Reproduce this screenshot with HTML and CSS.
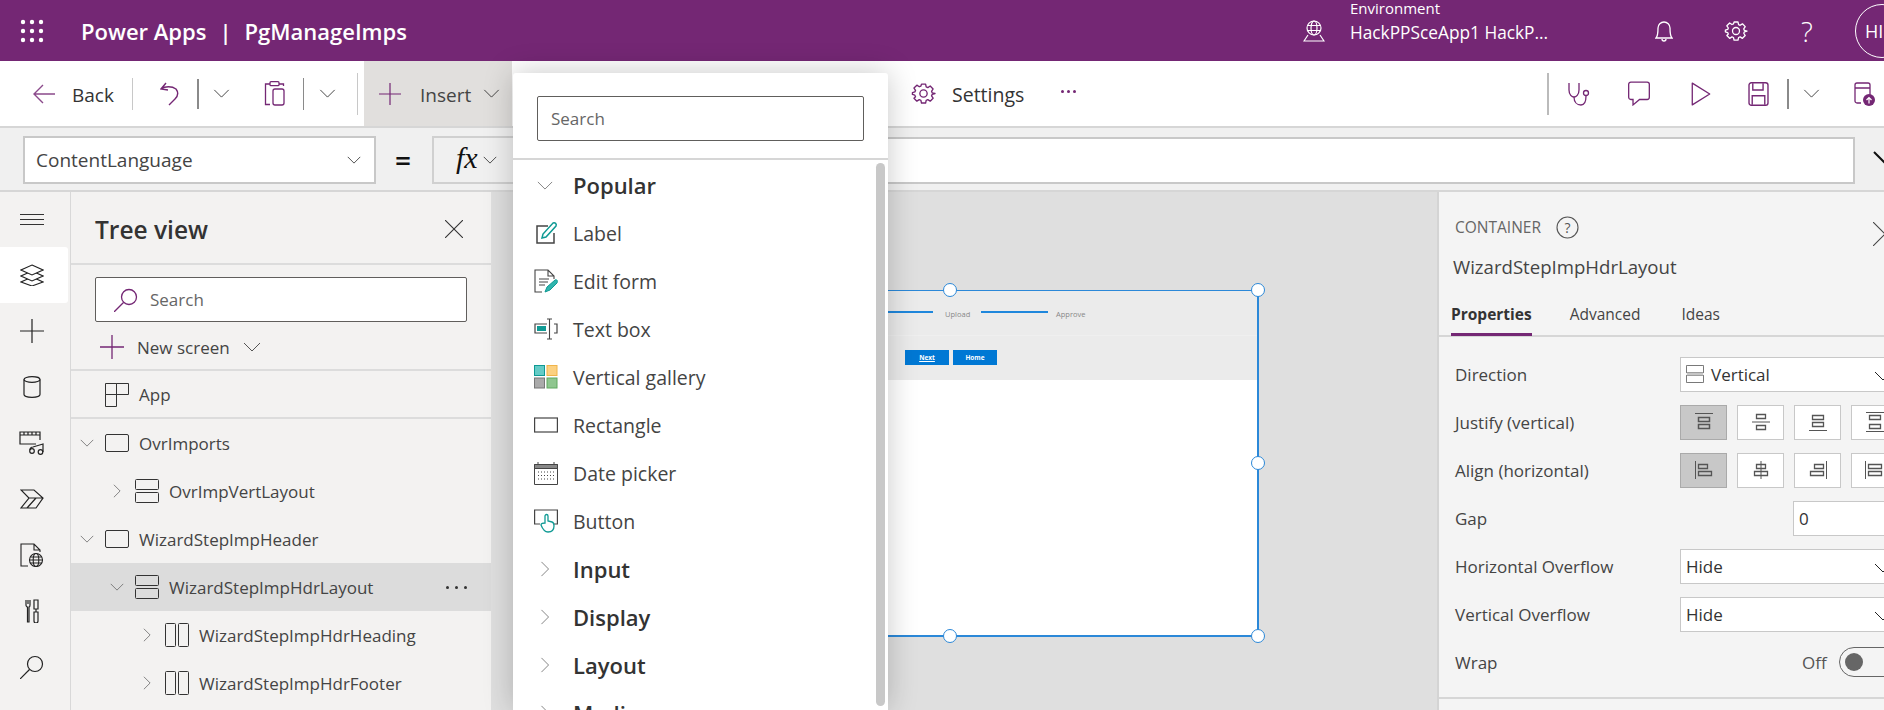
FILE: index.html
```html
<!DOCTYPE html>
<html lang="en">
<head>
    <meta charset="UTF-8">
    <meta name="viewport" content="width=device-width, initial-scale=1.0">
    <title>Power Apps | PgManageImps</title>
    <link rel="stylesheet" href="styles.css">
</head>
<body>
    <svg class="sprite" width="0" height="0">
        <symbol id="chev-down" viewBox="0 0 18 10"><path d="M1 1l8 8 8-8" fill="none" stroke="currentColor"/></symbol>
        <symbol id="chev-right" viewBox="0 0 10 18"><path d="M1 1l8 8-8 8" fill="none" stroke="currentColor"/></symbol>
        <symbol id="box" viewBox="0 0 24 24"><rect x=".5" y="3.500" width="23" height="17" rx="1.500" fill="none" stroke="currentColor"/></symbol>
        <symbol id="vert" viewBox="0 0 24 24"><rect x=".5" y=".5" width="23" height="10" rx="1" fill="none" stroke="currentColor"/><rect x=".5" y="13.500" width="23" height="10" rx="1" fill="none" stroke="currentColor"/></symbol>
        <symbol id="horiz" viewBox="0 0 24 24"><rect x=".5" y=".5" width="10" height="23" rx="1" fill="none" stroke="currentColor"/><rect x="13.500" y=".5" width="10" height="23" rx="1" fill="none" stroke="currentColor"/></symbol>
        <symbol id="gear" viewBox="0 0 24 24"><path d="M9.600 1h4.800l.7 3.200 1.900.8 2.800-1.800 3.400 3.400-1.800 2.800.8 1.900 3.200.7v0l-3.200.9-.8 1.800 1.800 2.800-3.400 3.400-2.800-1.800-1.900.8-.7 3.200H9.600l-.7-3.200-1.900-.8-2.800 1.800-3.400-3.400L2.600 15.700l-.8-1.800L-1 13v-2l2.800-.9.8-1.800L.8 5.600l3.400-3.400L7 4l1.900-.8z" transform="translate(2.200 2.200) scale(.82)" fill="none" stroke="currentColor" stroke-width="1.600" stroke-linejoin="round"/><circle cx="12" cy="12" r="3.500" fill="none" stroke="currentColor" stroke-width="1.300"/></symbol>
    </svg>

    <header class="suite-bar">
        <svg class="waffle" width="24" height="24" viewBox="0 0 24 24" fill="#fff">
            <circle cx="3" cy="3" r="2.200"/><circle cx="12" cy="3" r="2.200"/><circle cx="21" cy="3" r="2.200"/>
            <circle cx="3" cy="12" r="2.200"/><circle cx="12" cy="12" r="2.200"/><circle cx="21" cy="12" r="2.200"/>
            <circle cx="3" cy="21" r="2.200"/><circle cx="12" cy="21" r="2.200"/><circle cx="21" cy="21" r="2.200"/>
        </svg>
        <div class="app-title">Power Apps<span class="title-bar">|</span>PgManageImps</div>
        <svg class="env-globe" width="22" height="22" viewBox="0 0 22 22" fill="none" stroke="#fff" stroke-width="1.200">
            <circle cx="11" cy="8" r="7"/><ellipse cx="11" cy="8" rx="3" ry="7"/><path d="M4.500 5.500h13M4.500 10.500h13M5 15l-4 6h20l-4-6"/>
        </svg>
        <div class="env">
            <div class="env-label">Environment</div>
            <div class="env-name">HackPPSceApp1 HackP...</div>
        </div>
        <svg class="bell" width="18" height="24" viewBox="0 0 18 24" fill="none" stroke="#fff" stroke-width="1.300">
            <path d="M1 19c2-2 2-5 2-10a6 6 0 0 1 12 0c0 5 0 8 2 10z"/><path d="M7 20a2 2 0 0 0 4 0"/>
        </svg>
        <svg class="top-gear" width="24" height="24"><use href="#gear"/></svg>
        <div class="help">?</div>
        <div class="avatar">HI</div>
    </header>

    <div class="toolbar">
        <svg class="back-arrow" width="22" height="20" viewBox="0 0 22 20" fill="none" stroke="#8b4a8b" stroke-width="1.400"><path d="M10 1l-9 9 9 9M1 10h21"/></svg>
        <span class="tb-text back-text">Back</span>
        <i class="sep sep-a"></i>
        <svg class="undo" width="20" height="24" viewBox="0 0 20 24" fill="none" stroke="#742774" stroke-width="1.400"><path d="M6 1L1 7l7 1M1 7c4-3 11-3 15 0 3 4 2 7-1 10l-6 6"/></svg>
        <i class="sep sep-b"></i>
        <svg class="tb-chev chev-a" width="17" height="9"><use href="#chev-down"/></svg>
        <svg class="clip" width="21" height="25" viewBox="0 0 21 25" fill="none" stroke="#742774" stroke-width="1.300"><path d="M6 3H1.500v20.500H6M15 3h4.500v2"/><rect x="6" y=".7" width="9" height="4" rx="1"/><rect x="9" y="8" width="11" height="16" rx="2"/></svg>
        <i class="sep sep-c"></i>
        <svg class="tb-chev chev-b" width="17" height="9"><use href="#chev-down"/></svg>
        <i class="sep sep-d"></i>
        <div class="insert-btn">
            <svg width="22" height="22" viewBox="0 0 22 22" stroke="#742774" stroke-width="1.200"><path d="M11 0v22M0 11h22"/></svg>
            <span class="tb-text">Insert</span>
            <svg class="tb-chev" width="17" height="9"><use href="#chev-down"/></svg>
        </div>
        <svg class="tb-gear" width="25" height="25"><use href="#gear"/></svg>
        <span class="tb-text settings-text">Settings</span>
        <span class="tb-dots"><i></i><i></i><i></i></span>
        <i class="sep sep-e"></i>
        <svg class="tb-r steth" width="22" height="24" viewBox="0 0 22 24" fill="none" stroke="#742774" stroke-width="1.300"><path d="M1 1v7c0 5 3 7 5 7s5-2 5-7V1"/><path d="M6 15c0 5 3 8 7 8s5-4 5-9"/><circle cx="18" cy="11" r="2.500"/></svg>
        <svg class="tb-r comment" width="24" height="25" viewBox="0 0 21 23" fill="none" stroke="#742774" stroke-width="1.200"><path d="M3 1h15a2 2 0 0 1 2 2v12a2 2 0 0 1-2 2h-7l-6 5v-5H3a2 2 0 0 1-2-2V3a2 2 0 0 1 2-2z"/></svg>
        <svg class="tb-r play" width="20" height="24" viewBox="0 0 18 22" fill="none" stroke="#742774" stroke-width="1.200" stroke-linejoin="round"><path d="M1 1l16 10L1 21z"/></svg>
        <svg class="tb-r save" width="21" height="24" viewBox="0 0 18 21" fill="none" stroke="#742774" stroke-width="1.200"><rect x=".7" y=".7" width="16.600" height="19.600" rx="2"/><path d="M4 1v6h9V1M3.500 20v-8h11v8"/></svg>
        <i class="sep sep-b sep-f"></i>
        <svg class="tb-chev chev-c" width="17" height="9"><use href="#chev-down"/></svg>
        <svg class="tb-r publish" width="21" height="24" viewBox="0 0 21 24"><path d="M7 21H3a2 2 0 0 1-2-2V3a2 2 0 0 1 2-2h11a2 2 0 0 1 2 2v10M1 6h15" fill="none" stroke="#742774" stroke-width="1.300"/><circle cx="15" cy="18" r="6" fill="#742774"/><path d="M15 21.500v-6M12.500 18l2.500-2.500 2.500 2.500" fill="none" stroke="#fff" stroke-width="1.200"/></svg>
    </div>

    <div class="formula-bar">
        <div class="prop-select">
            <span>ContentLanguage</span>
            <svg width="14" height="8"><use href="#chev-down"/></svg>
        </div>
        <div class="equals">=</div>
        <div class="fx-btn">
            <span class="fx-text">fx</span>
            <svg width="14" height="8"><use href="#chev-down"/></svg>
        </div>
        <div class="formula-input"></div>
        <svg class="formula-chev" width="36" height="20"><use href="#chev-down"/></svg>
    </div>

    <main class="workspace">
        <nav class="rail">
            <svg class="rail-hamb" width="24" height="12" viewBox="0 0 24 12" stroke="#333"><path d="M0 .5h24M0 5.500h24M0 10.500h24"/></svg>
            <div class="rail-item active">
                <svg width="24" height="22" viewBox="0 0 24 22" fill="#fff" stroke="#222" stroke-width="1.100"><path d="M12 13l11 5-11 4-11-4z"/><path d="M12 7l11 5-11 5-11-5z"/><path d="M12 1l11 5-11 5L1 6z"/></svg>
            </div>
            <div class="rail-item">
                <svg width="24" height="24" viewBox="0 0 24 24" stroke="#222" stroke-width="1.200"><path d="M12 0v24M0 12h24"/></svg>
            </div>
            <div class="rail-item">
                <svg width="18" height="22" viewBox="0 0 18 22" fill="none" stroke="#222" stroke-width="1.200"><ellipse cx="9" cy="3.500" rx="8" ry="2.800"/><path d="M1 3.500v15c0 1.500 3.500 2.800 8 2.800s8-1.300 8-2.800v-15"/></svg>
            </div>
            <div class="rail-item">
                <svg width="26" height="24" viewBox="0 0 26 24" fill="none" stroke="#222" stroke-width="1.200"><path d="M17 13H1V1h20v8M1 4h20M5 1v3M9 1v3M13 1v3M17 1v3"/><path d="M11 19c0-3 3-3 3-3l10-3v8"/><circle cx="21.500" cy="21" r="2.300"/><circle cx="13" cy="20" r="2.300"/></svg>
            </div>
            <div class="rail-item">
                <svg width="24" height="20" viewBox="0 0 24 20" fill="none" stroke="#222" stroke-width="1.200"><path d="M1 1h13l9 8-7 10H1l8-10zM9 9h14M7 19l9-10"/></svg>
            </div>
            <div class="rail-item">
                <svg width="24" height="24" viewBox="0 0 24 24" fill="none" stroke="#222" stroke-width="1.100"><path d="M8 23H1V1h13l6 6v2M14 1v6h6"/><circle cx="16" cy="17" r="6.500"/><ellipse cx="16" cy="17" rx="2.800" ry="6.500"/><path d="M9.500 17h13M10.500 14h11M10.500 20h11"/></svg>
            </div>
            <div class="rail-item">
                <svg width="16" height="24" viewBox="0 0 16 24" fill="none" stroke="#222" stroke-width="1.200"><path d="M2 1v5c0 1 1 2 1.500 2v15h1.500V8c.5 0 1-1 1-2V1M4 1v4"/><path d="M10 1h4v9h-4zM12 10v3M10 13h4v9a2 2 0 0 1-4 0z"/></svg>
            </div>
            <div class="rail-item">
                <svg width="24" height="24" viewBox="0 0 24 24" fill="none" stroke="#222" stroke-width="1.200"><circle cx="15" cy="9" r="7.500"/><path d="M9.500 14.500L0 24"/></svg>
            </div>
        </nav>

        <section class="tree">
            <div class="tree-head">
                <span class="tree-title">Tree view</span>
                <svg width="18" height="18" viewBox="0 0 18 18" stroke="#333" stroke-width="1.100"><path d="M0 0l18 18M18 0L0 18"/></svg>
            </div>
            <div class="tree-tools">
                <div class="search-box tree-search">
                    <svg width="24" height="24" viewBox="0 0 24 24" fill="none" stroke="#742774" stroke-width="1.300"><circle cx="15" cy="9" r="7.500"/><path d="M9.500 14.500L0 24"/></svg>
                    <span>Search</span>
                </div>
                <div class="new-screen">
                    <svg width="24" height="24" viewBox="0 0 24 24" stroke="#742774" stroke-width="1.300"><path d="M12 0v24M0 12h24"/></svg>
                    <span>New screen</span>
                    <svg class="ns-chev" width="18" height="10"><use href="#chev-down"/></svg>
                </div>
            </div>
            <div class="app-row">
                <svg width="24" height="24" viewBox="0 0 24 24" fill="none" stroke="#333"><path d="M.5.500h11v11H.5zM11.500.500h12v11h-12zM.5 11.500h11v12H.5z"/></svg>
                <span>App</span>
            </div>
            <ul class="tree-list">
                <li class="tree-row lvl-0"><svg class="twist" width="14" height="8"><use href="#chev-down"/></svg><svg class="node" width="24" height="24"><use href="#box"/></svg><span>OvrImports</span></li>
                <li class="tree-row lvl-1"><svg class="twist" width="14" height="14" viewBox="-4 0 18 18"><use href="#chev-right" width="10" height="18"/></svg><svg class="node" width="24" height="24"><use href="#vert"/></svg><span>OvrImpVertLayout</span></li>
                <li class="tree-row lvl-0"><svg class="twist" width="14" height="8"><use href="#chev-down"/></svg><svg class="node" width="24" height="24"><use href="#box"/></svg><span>WizardStepImpHeader</span></li>
                <li class="tree-row lvl-1 selected"><svg class="twist" width="14" height="8"><use href="#chev-down"/></svg><svg class="node" width="24" height="24"><use href="#vert"/></svg><span>WizardStepImpHdrLayout</span><b class="more"><i></i><i></i><i></i></b></li>
                <li class="tree-row lvl-2"><svg class="twist" width="14" height="14" viewBox="-4 0 18 18"><use href="#chev-right" width="10" height="18"/></svg><svg class="node" width="24" height="24"><use href="#horiz"/></svg><span>WizardStepImpHdrHeading</span></li>
                <li class="tree-row lvl-2"><svg class="twist" width="14" height="14" viewBox="-4 0 18 18"><use href="#chev-right" width="10" height="18"/></svg><svg class="node" width="24" height="24"><use href="#horiz"/></svg><span>WizardStepImpHdrFooter</span></li>
            </ul>
        </section>

        <section class="canvas">
            <div class="frame">
                <div class="frame-steps">
                    <i class="step-line first"></i>
                    <span class="step-name">Upload</span>
                    <i class="step-line"></i>
                    <span class="step-name">Approve</span>
                </div>
                <div class="frame-btns">
                    <span class="mini-btn under">Next</span>
                    <span class="mini-btn">Home</span>
                </div>
                <i class="handle h-top"></i>
                <i class="handle h-tr"></i>
                <i class="handle h-right"></i>
                <i class="handle h-br"></i>
                <i class="handle h-bottom"></i>
            </div>
        </section>

        <aside class="props">
            <div class="props-type">
                <span>CONTAINER</span>
                <svg width="23" height="23" viewBox="0 0 23 23"><circle cx="11.500" cy="11.500" r="10.500" fill="none" stroke="#555" stroke-width="1.100"/><text x="11.500" y="16.500" text-anchor="middle" font-size="14" fill="#555" font-family="Open Sans">?</text></svg>
                <svg class="props-close" width="24" height="24" viewBox="0 0 24 24" stroke="#444" stroke-width="1.100"><path d="M0 0l24 24M24 0L0 24"/></svg>
            </div>
            <div class="props-name">WizardStepImpHdrLayout</div>
            <div class="tabs">
                <span class="tab on">Properties</span>
                <span class="tab">Advanced</span>
                <span class="tab">Ideas</span>
            </div>
            <div class="prop-row">
                <label>Direction</label>
                <div class="ctl select">
                    <svg class="node" width="18" height="18"><use href="#vert"/></svg>
                    <span class="dark">Vertical</span>
                    <svg class="sel-chev" width="18" height="10"><use href="#chev-down"/></svg>
                </div>
            </div>
            <div class="prop-row">
                <label>Justify (vertical)</label>
                <div class="btn-group">
                    <div class="ctl sq on"><svg width="20" height="18" viewBox="0 0 20 18" fill="none" stroke="#555"><path d="M1 .5h18"/><path d="M4.500 4.500h11v4h-11zM4.500 11.500h11v4h-11z" stroke-width="1.500"/></svg></div>
                    <div class="ctl sq"><svg width="20" height="18" viewBox="0 0 20 18" fill="none" stroke="#555"><path d="M1 9h18"/><path d="M5.500 1.500h9v4h-9zM5.500 12.500h9v4h-9z" stroke-width="1.300"/></svg></div>
                    <div class="ctl sq"><svg width="20" height="18" viewBox="0 0 20 18" fill="none" stroke="#555"><path d="M1 17.500h18"/><path d="M4.500 2.500h11v4h-11zM4.500 9.500h11v4h-11z" stroke-width="1.300"/></svg></div>
                    <div class="ctl sq"><svg width="20" height="20" viewBox="0 0 20 20" fill="none" stroke="#555"><path d="M1 .5h18M1 19.500h18"/><path d="M4.500 3.500h11v4h-11zM4.500 12.500h11v4h-11z" stroke-width="1.300"/></svg></div>
                </div>
            </div>
            <div class="prop-row">
                <label>Align (horizontal)</label>
                <div class="btn-group">
                    <div class="ctl sq on"><svg width="18" height="20" viewBox="0 0 18 20" fill="none" stroke="#555"><path d="M.5 1v18"/><path d="M3.500 4.500h9v4h-9zM3.500 11.500h13v4h-13z" stroke-width="1.300"/></svg></div>
                    <div class="ctl sq"><svg width="18" height="20" viewBox="0 0 18 20" fill="none" stroke="#555"><path d="M9 1v18"/><path d="M4.500 4.500h9v4h-9zM2.500 11.500h13v4h-13z" stroke-width="1.300"/></svg></div>
                    <div class="ctl sq"><svg width="18" height="20" viewBox="0 0 18 20" fill="none" stroke="#555"><path d="M17.500 1v18"/><path d="M5.500 4.500h9v4h-9zM1.500 11.500h13v4h-13z" stroke-width="1.300"/></svg></div>
                    <div class="ctl sq"><svg width="20" height="20" viewBox="0 0 20 20" fill="none" stroke="#555"><path d="M.5 1v18M19.500 1v18"/><path d="M3.500 4.500h13v4h-13zM3.500 11.500h13v4h-13z" stroke-width="1.300"/></svg></div>
                </div>
            </div>
            <div class="prop-row">
                <label>Gap</label>
                <div class="ctl gap-input"><span class="dark">0</span></div>
            </div>
            <div class="prop-row">
                <label>Horizontal Overflow</label>
                <div class="ctl select"><span class="dark">Hide</span><svg class="sel-chev" width="18" height="10"><use href="#chev-down"/></svg></div>
            </div>
            <div class="prop-row">
                <label>Vertical Overflow</label>
                <div class="ctl select"><span class="dark">Hide</span><svg class="sel-chev" width="18" height="10"><use href="#chev-down"/></svg></div>
            </div>
            <div class="prop-row">
                <label>Wrap</label>
                <span class="off-text">Off</span>
                <div class="toggle"><i></i></div>
            </div>
            <div class="props-end"></div>
        </aside>
    </main>

    <div class="flyout">
        <div class="fly-head">
            <div class="search-box fly-search"><span>Search</span></div>
        </div>
        <div class="fly-body">
            <div class="fly-group"><svg class="fly-chev" width="16" height="9"><use href="#chev-down"/></svg><span>Popular</span></div>
            <div class="fly-item">
                <svg width="24" height="24" viewBox="0 0 24 24" fill="none"><path d="M14 5H3v17h17V12" stroke="#444" stroke-width="1.500"/><path d="M8 17l1-4L19 2c2-1 4 1 3 3L12 16z" stroke="#0f9a94" stroke-width="1.500"/></svg>
                <span>Label</span>
            </div>
            <div class="fly-item">
                <svg width="24" height="24" viewBox="0 0 24 24" fill="none"><path d="M8 23H1V1h13l6 6v3M14 1v6h6M5 10h10M5 13h9M5 16h6" stroke="#444" stroke-width="1.100"/><path d="M11 23l2-5 8-7c2-1 3 1 2 3l-7 7z" fill="#2fb5ae" stroke="#0f9a94"/></svg>
                <span>Edit form</span>
            </div>
            <div class="fly-item">
                <svg width="24" height="24" viewBox="0 0 24 24" fill="none"><path d="M13 7H1v9h12M20 7h3v9h-3" stroke="#444" stroke-width="1.200"/><rect x="3" y="9" width="9" height="5" fill="#0f9a94"/><path d="M13 2h5M13 22h5M15.500 2v20" stroke="#444" stroke-width="1.100"/></svg>
                <span>Text box</span>
            </div>
            <div class="fly-item">
                <svg width="24" height="24" viewBox="0 0 24 24"><rect x=".5" y=".5" width="10" height="10" fill="#65cbc6" stroke="#0f9a94"/><rect x="13" y=".5" width="10" height="10" fill="#fcd181" stroke="#f0b44a"/><rect x=".5" y="13" width="10" height="10" fill="#aaa" stroke="#777"/><rect x="13" y="13" width="10" height="10" fill="#8fc68f" stroke="#5fa85f"/></svg>
                <span>Vertical gallery</span>
            </div>
            <div class="fly-item">
                <svg width="24" height="24" viewBox="0 0 24 24" fill="none" stroke="#444" stroke-width="1.200"><rect x=".6" y="5" width="22.800" height="14"/></svg>
                <span>Rectangle</span>
            </div>
            <div class="fly-item">
                <svg width="24" height="24" viewBox="0 0 24 24" fill="none" stroke="#444"><path d="M.5 3.500h23v20H.5z"/><path d="M.5 3.500h23v4H.5z" fill="#888"/><path d="M4 1v3M20 1v3"/><path d="M4 11h16M4 14.500h16M4 18h16" stroke-dasharray="1 2"/></svg>
                <span>Date picker</span>
            </div>
            <div class="fly-item">
                <svg width="24" height="24" viewBox="0 0 24 24" fill="none"><path d="M6 15H.6V1h22.800v14H19" stroke="#444" stroke-width="1.200"/><path d="M11 14V7c0-2 3-2 3 0v5l4 1c2 .5 2 2 2 4 0 5-3 6-6 6s-5-2-7-7c0-2 2-2 4-2z" fill="#fff" stroke="#0f9a94" stroke-width="1.300"/></svg>
                <span>Button</span>
            </div>
            <div class="fly-group"><svg class="fly-chev" width="16" height="16" viewBox="-4 0 18 18"><use href="#chev-right" width="10" height="18"/></svg><span>Input</span></div>
            <div class="fly-group"><svg class="fly-chev" width="16" height="16" viewBox="-4 0 18 18"><use href="#chev-right" width="10" height="18"/></svg><span>Display</span></div>
            <div class="fly-group"><svg class="fly-chev" width="16" height="16" viewBox="-4 0 18 18"><use href="#chev-right" width="10" height="18"/></svg><span>Layout</span></div>
            <div class="fly-group"><svg class="fly-chev" width="16" height="16" viewBox="-4 0 18 18"><use href="#chev-right" width="10" height="18"/></svg><span>Media</span></div>
            <div class="fly-scroll"></div>
        </div>
    </div>
</body>
</html>
```

FILE: styles.css
```css
* {
    box-sizing: border-box;
}

html, body {
    margin: 0;
    height: 710px;
    overflow: hidden;
}

body {
    font-family: "Open Sans", "Noto Sans", Arial, sans-serif;
    font-size: 17px;
    color: #444;
    background-color: #f3f2f1;
    position: relative;
}

i, b {
    display: block;
    font-style: normal;
}

svg {
    flex: none;
    display: block;
}

.sprite {
    position: absolute;
}

/* top purple bar */
.suite-bar {
    height: 61px;
    background-color: #742774;
    color: #fff;
    display: flex;
    align-items: center;
    padding-left: 20px;
    overflow: hidden;
}

.app-title {
    margin-left: 37px;
    font-size: 22px;
    font-weight: 600;
    width: 1222px;
    flex: none;
    white-space: nowrap;
}

.title-bar {
    margin: 0 13px;
}

.env {
    margin-left: 25px;
    width: 305px;
    flex: none;
    align-self: flex-start;
}

.env-label {
    font-size: 15px;
    line-height: 16px;
}

.env-name {
    font-size: 17.300px;
    line-height: 24px;
    margin-top: 5px;
    white-space: nowrap;
}

.top-gear {
    margin-left: 51px;
    color: #fff;
}

.help {
    margin-left: 53px;
    font-size: 28px;
    width: 16px;
    flex: none;
    font-weight: 300;
}

.avatar {
    margin-left: 38px;
    width: 54px;
    height: 54px;
    flex: none;
    border: 1px solid #fff;
    border-radius: 50%;
    font-size: 18px;
    line-height: 52px;
    padding-left: 9px;
}

/* command bar */
.toolbar {
    height: 67px;
    background-color: #fff;
    border-bottom: 2px solid #d6d6d6;
    display: flex;
    align-items: center;
    padding-left: 33px;
    color: #333;
}

.tb-text {
    font-size: 19px;
    color: #333;
    white-space: nowrap;
    margin-top: 2px;
}

.tb-chev {
    color: #333;
}

.back-text {
    margin-left: 17px;
    width: 41px;
}

.sep {
    flex: none;
    width: 1px;
    height: 32px;
    background-color: #c8c8c8;
}

.sep-a { margin-left: 19px; }
.undo { margin-left: 27px; }
.sep-b { margin-left: 17px; width: 2px; height: 30px; background-color: #8a8a8a; }
.chev-a { margin-left: 14px; }
.clip { margin-left: 34px; }
.sep-c { margin-left: 18px; width: 1px; background-color: #8a8a8a; }
.chev-b { margin-left: 15px; }
.sep-d { margin-left: 21px; height: 42px; }

.insert-btn {
    margin-left: 6px;
    width: 148px;
    height: 65px;
    flex: none;
    background-color: #e1dfdd;
    display: flex;
    align-items: center;
    padding-left: 15px;
}

.insert-btn .tb-text {
    margin-left: 19px;
    width: 63px;
    color: #444;
}

.tb-gear {
    margin-left: 399px;
    color: #742774;
}

.settings-text {
    margin-left: 16px;
    width: 74px;
    font-size: 19.500px;
}

.tb-dots {
    margin-left: 35px;
    display: flex;
    gap: 3px;
    margin-bottom: 4px;
}

.tb-dots i {
    width: 3px;
    height: 3px;
    border-radius: 50%;
    background-color: #742774;
}

.sep-e { margin-left: 471px; width: 2px; height: 42px; background-color: #bbb; }
.steth { margin-left: 19px; }
.comment { margin-left: 37px; }
.play { margin-left: 40px; }
.save { margin-left: 37px; }
.sep-f { margin-left: 18px; }
.chev-c { margin-left: 14px; }
.publish { margin-left: 34px; }

/* formula bar */
.formula-bar {
    height: 64px;
    background-color: #f0f0f0;
    border-bottom: 2px solid #d6d6d6;
    display: flex;
    align-items: center;
    padding-left: 23px;
    padding-top: 2px;
    overflow: hidden;
}

.prop-select {
    width: 353px;
    height: 48px;
    flex: none;
    background-color: #fff;
    border: 2px solid #c8c8c8;
    display: flex;
    align-items: center;
    justify-content: space-between;
    padding: 0 13px 0 11px;
    font-size: 19px;
    color: #444;
}

.prop-select svg,
.fx-btn svg {
    color: #222;
}

.equals {
    margin-left: 19px;
    width: 19px;
    flex: none;
    font-size: 28px;
    font-weight: 600;
    color: #111;
    line-height: 1;
}

.fx-btn {
    margin-left: 18px;
    width: 90px;
    height: 48px;
    flex: none;
    border: 2px solid #d0d0d0;
    display: flex;
    align-items: center;
    padding-left: 22px;
    gap: 5px;
}

.fx-text {
    font-family: "Liberation Serif", serif;
    font-style: italic;
    font-size: 30px;
    color: #111;
    margin-bottom: 4px;
}

.formula-input {
    margin-left: -1px;
    width: 1334px;
    height: 47px;
    flex: none;
    background-color: #fff;
    border: 2px solid #c8c8c8;
}

.formula-chev {
    margin-left: 17px;
    flex: none;
    color: #111;
}

/* main area */
.workspace {
    height: 518px;
    display: grid;
    grid-template-columns: 71px 420px 946px 447px;
    overflow: hidden;
}

.rail {
    border-right: 1px solid #d8d8d8;
    background-color: #f3f2f1;
    padding-top: 22px;
}

.rail-hamb {
    margin: 0 0 21px 20px;
}

.rail-item {
    width: 68px;
    height: 56px;
    display: flex;
    align-items: center;
    justify-content: center;
    padding-right: 5px;
}

.rail-item.active {
    background-color: #fff;
    border-radius: 0 3px 3px 0;
}

.tree {
    background-color: #f3f2f1;
    overflow: hidden;
}

.tree-head {
    height: 73px;
    display: flex;
    align-items: center;
    justify-content: space-between;
    padding: 3px 28px 0 24px;
    border-bottom: 2px solid #dcdcdc;
}

.tree-title {
    font-size: 24.500px;
    font-weight: 600;
    color: #333;
}

.tree-tools {
    height: 106px;
    padding: 12px 0 0 24px;
    border-bottom: 2px solid #dcdcdc;
}

.search-box {
    height: 45px;
    background-color: #fff;
    border: 1px solid #605e5c;
    border-radius: 2px;
    display: flex;
    align-items: center;
    color: #666;
}

.tree-search {
    width: 372px;
    padding-left: 18px;
    gap: 12px;
}

.new-screen {
    margin: 13px 0 0 5px;
    display: flex;
    align-items: center;
    gap: 13px;
}

.ns-chev {
    color: #555;
}

.app-row {
    height: 48px;
    display: flex;
    align-items: center;
    padding: 1px 0 0 34px;
    gap: 10px;
    border-bottom: 2px solid #dcdcdc;
}

.app-row svg {
    color: #333;
}

.tree-list {
    list-style: none;
    margin: 0;
    padding: 0;
}

.tree-row {
    height: 48px;
    display: flex;
    align-items: center;
    white-space: nowrap;
}

.tree-row span {
    margin-left: 10px;
}

.lvl-0 { padding-left: 9px; }
.lvl-1 { padding-left: 39px; }
.lvl-2 { padding-left: 69px; }

.twist {
    color: #666;
    margin-right: 11px;
}

.node {
    color: #333;
}

.selected {
    background-color: #dcdcdc;
}

.more {
    margin-left: auto;
    margin-right: 24px;
    display: flex;
    gap: 6px;
}

.more i {
    width: 3px;
    height: 3px;
    border-radius: 50%;
    background-color: #333;
}

/* canvas */
.canvas {
    background-color: #dfdfdf;
    padding: 98px 0 0 109px;
}

.frame {
    width: 659px;
    height: 347px;
    background-color: #fff;
    border: solid #2b88d8;
    border-width: 1px 2px 2px 1px;
    position: relative;
}

.frame-steps {
    height: 45px;
    background-color: #ebebeb;
    border-bottom: 1px solid #efefef;
    display: flex;
    align-items: center;
    padding-bottom: 2px;
    font-size: 7.500px;
}

.step-line {
    width: 67px;
    height: 2px;
    background-color: #1f87dc;
}

.step-line.first {
    width: 332px;
    margin-right: 12px;
}

.step-name {
    color: #888;
    margin-right: 11px;
    margin-top: 3px;
    width: 25px;
}

.step-name:last-child {
    margin-left: 8px;
    margin-right: 0;
    width: auto;
}

.frame-btns {
    height: 44px;
    background-color: #ebebeb;
    display: flex;
    padding: 14px 0 0 304px;
    gap: 4px;
}

.mini-btn {
    width: 44px;
    height: 15px;
    background-color: #0078d4;
    color: #fff;
    font-size: 6.500px;
    font-weight: 700;
    text-align: center;
    line-height: 15px;
}

.mini-btn.under {
    text-decoration: underline;
}

.handle {
    position: absolute;
    width: 14px;
    height: 14px;
    border-radius: 50%;
    background-color: #fff;
    border: 1px solid #2b88d8;
}

.h-top { top: -8px; left: 342px; }
.h-tr { top: -8px; right: -8px; }
.h-right { top: 165px; right: -8px; }
.h-br { bottom: -8px; right: -8px; }
.h-bottom { bottom: -8px; left: 342px; }

/* right panel */
.props {
    background-color: #f4f4f4;
    border-left: 2px solid #d4d4d4;
    overflow: hidden;
    position: relative;
}

.props-type {
    display: flex;
    align-items: center;
    gap: 15px;
    padding: 21px 0 0 16px;
    font-size: 15.500px;
    color: #666;
    height: 49px;
}

.props-close {
    position: absolute;
    top: 30px;
    left: 434px;
}

.props-name {
    margin: 13px 0 0 14px;
    font-size: 18.600px;
    line-height: 25px;
    color: #444;
}

.tabs {
    margin-top: 20px;
    height: 38px;
    display: flex;
    border-bottom: 2px solid #d6d6d6;
    padding-left: 12px;
    font-size: 15.500px;
}

.tab {
    margin-right: 38px;
    line-height: 30px;
}

.tab:nth-child(2) {
    margin-right: 41px;
}

.tab.on {
    font-weight: 700;
    color: #333;
    border-bottom: 3px solid #742774;
    height: 37px;
}

.prop-row {
    height: 48px;
    display: flex;
    align-items: center;
    padding-left: 16px;
    position: relative;
    top: 13px;
}

.prop-row label {
    width: 225px;
    flex: none;
}

.ctl {
    height: 35px;
    background-color: #fff;
    border: 1px solid #c8c8c8;
    display: flex;
    align-items: center;
    flex: none;
}

.select {
    width: 240px;
    padding-left: 5px;
    gap: 7px;
    position: relative;
}

.dark {
    color: #333;
}

.sel-chev {
    position: absolute;
    left: 193px;
    top: 13px;
    color: #222;
}

.btn-group {
    display: flex;
    gap: 10px;
}

.sq {
    width: 47px;
    justify-content: center;
}

.sq.on {
    background-color: #c8c8c8;
    border-color: #aaa;
}

.gap-input {
    margin-left: 113px;
    width: 120px;
    padding-left: 5px;
}

.off-text {
    margin-left: 122px;
    width: 37px;
    flex: none;
    color: #555;
}

.toggle {
    width: 60px;
    height: 30px;
    flex: none;
    border: 1px solid #666;
    border-radius: 15px;
    padding: 5px 0 0 5px;
}

.toggle i {
    width: 18px;
    height: 18px;
    border-radius: 50%;
    background-color: #666;
}

.props-end {
    margin-top: 24px;
    border-top: 2px solid #d6d6d6;
}

/* insert flyout */
.flyout {
    position: absolute;
    top: 73px;
    left: 513px;
    width: 375px;
    height: 637px;
    background-color: #fff;
    border-radius: 3px 3px 0 0;
    box-shadow: 0 0 30px rgba(0, 0, 0, 0.22);
    overflow: hidden;
}

.fly-head {
    height: 87px;
    padding: 23px 24px 0;
    border-bottom: 2px solid #d6d6d6;
}

.fly-search {
    height: 45px;
    padding-left: 13px;
}

.fly-body {
    position: relative;
    padding-top: 1px;
}

.fly-group,
.fly-item {
    height: 48px;
    display: flex;
    align-items: center;
    padding-left: 21px;
    font-size: 19.500px;
}

.fly-group {
    font-size: 22px;
    font-weight: 600;
    color: #333;
    padding-left: 24px;
}

.fly-group span {
    margin-left: 20px;
}

.fly-chev {
    color: #777;
}

.fly-item span {
    margin-left: 15px;
}

.fly-scroll {
    position: absolute;
    top: 3px;
    left: 363px;
    width: 9px;
    height: 543px;
    background-color: #c8c8c8;
    border-radius: 5px;
}
```
